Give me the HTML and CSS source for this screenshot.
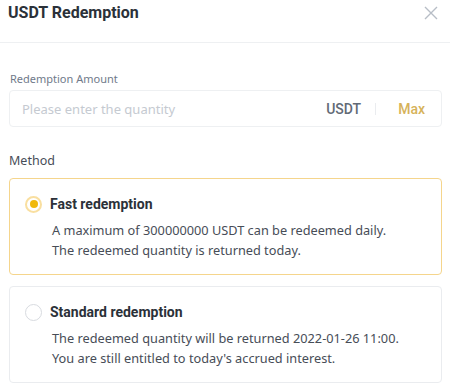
FILE: index.html
```html
<!DOCTYPE html>
<html lang="en">
<head>
<meta charset="utf-8">
<title>USDT Redemption</title>
<link rel="stylesheet" href="styles.css">
</head>
<body>
<div class="dialog">
  <div class="header">
    <h1 class="title">USDT Redemption</h1>
    <button class="close" aria-label="Close">
      <svg width="14" height="14" viewBox="0 0 14 14"><path d="M1 1L13 13M13 1L1 13" stroke="#B7BDC6" stroke-width="1.4" fill="none"/></svg>
    </button>
  </div>
  <div class="content">
    <label class="field-label">Redemption Amount</label>
    <div class="input-box">
      <span class="placeholder">Please enter the quantity</span>
      <span class="unit">USDT</span>
      <span class="sep"></span>
      <span class="max">Max</span>
    </div>
    <div class="section-label">Method</div>
    <div class="option selected">
      <div class="option-head">
        <span class="radio"><span class="dot"></span></span>
        <span class="option-title">Fast redemption</span>
      </div>
      <div class="option-desc">A maximum of 300000000 USDT can be redeemed daily.<br>The redeemed quantity is returned today.</div>
    </div>
    <div class="option">
      <div class="option-head">
        <span class="radio"></span>
        <span class="option-title">Standard redemption</span>
      </div>
      <div class="option-desc">The redeemed quantity will be returned 2022-01-26 11:00.<br>You are still entitled to today's accrued interest.</div>
    </div>
  </div>
</div>
</body>
</html>
```
FILE: styles.css
```css
* { box-sizing: border-box; }
html, body { margin: 0; padding: 0; background: #fff; }
body {
  font-family: "Noto Sans", "Open Sans", sans-serif;
  color: #1E2329;
  width: 450px;
}
.header {
  height: 43px;
  border-bottom: 1px solid #EEF0F2;
  display: flex;
  align-items: flex-start;
  justify-content: space-between;
  padding: 0 12px 0 8px;
}
.title {
  margin: 0;
  font-family: Roboto, "Noto Sans", sans-serif;
  font-size: 16px;
  line-height: 25px;
  font-weight: 700;
  color: #2B3139;
}
.close {
  border: 0;
  background: none;
  padding: 0;
  margin-top: 6px;
  width: 14px;
  height: 14px;
  display: flex;
}
.content {
  padding: 28px 8px 0 9px;
  display: flex;
  flex-direction: column;
}
.field-label {
  font-size: 11px;
  line-height: 16px;
  color: #707A8A;
  padding-left: 1px;
  margin-bottom: 3px;
}
.input-box {
  height: 37px;
  border: 1px solid #EEF0F2;
  border-radius: 4px;
  display: flex;
  align-items: center;
  padding: 0 16px 0 12px;
  font-size: 13px;
}
.placeholder { color: #C5CAD1; flex: 1; }
.unit { font-family: Roboto, "Noto Sans", sans-serif; font-size: 14px; color: #626A76; font-weight: 500; }
.sep { width: 1px; height: 12px; background: #EAECEF; margin: 0 22px 0 14px; }
.max { font-family: Roboto, "Noto Sans", sans-serif; font-size: 14px; color: #D6B25A; font-weight: 500; }
.section-label {
  margin-top: 25px;
  font-size: 12.5px;
  line-height: 18px;
  color: #474D57;
}
.option {
  margin-top: 8px;
  border: 1px solid #EAECEF;
  border-radius: 4px;
  padding: 15px 15px 14px 15px;
}
.option + .option { margin-top: 11px; }
.option.selected { border-color: #F5D58C; }
.option-head {
  display: flex;
  align-items: center;
  gap: 8px;
  height: 20px;
}
.radio {
  width: 17px;
  height: 17px;
  border-radius: 50%;
  border: 1.5px solid #D8DBE0;
  display: flex;
  align-items: center;
  justify-content: center;
  flex: none;
}
.selected .radio { border: 2px solid #F9DFA0; }
.dot { width: 8px; height: 8px; border-radius: 50%; background: #F0B90B; }
.option-title {
  font-family: Roboto, "Noto Sans", sans-serif;
  font-size: 14px;
  font-weight: 700;
  color: #2B3139;
}
.option-desc {
  margin-top: 6px;
  padding-left: 27px;
  font-size: 12.75px;
  line-height: 20px;
  color: #474D57;
}
```
